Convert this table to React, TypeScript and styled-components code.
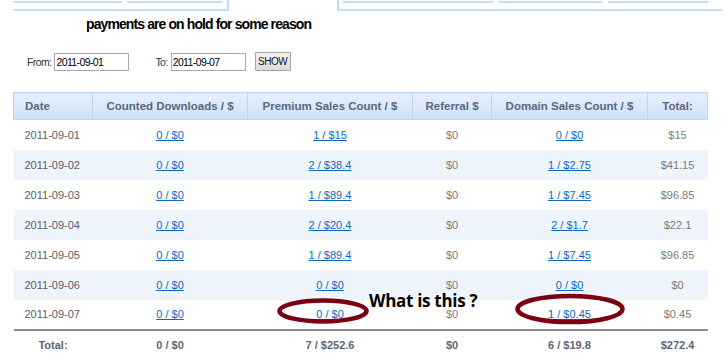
import styled, { createGlobalStyle } from "styled-components";

interface IRow {
  date: string;
  downloads: string;
  premium: string;
  referral: string;
  domain: string;
  total: string;
}

const rows: IRow[] = [
  { date: "2011-09-01", downloads: "0 / $0", premium: "1 / $15", referral: "$0", domain: "0 / $0", total: "$15" },
  { date: "2011-09-02", downloads: "0 / $0", premium: "2 / $38.4", referral: "$0", domain: "1 / $2.75", total: "$41.15" },
  { date: "2011-09-03", downloads: "0 / $0", premium: "1 / $89.4", referral: "$0", domain: "1 / $7.45", total: "$96.85" },
  { date: "2011-09-04", downloads: "0 / $0", premium: "2 / $20.4", referral: "$0", domain: "2 / $1.7", total: "$22.1" },
  { date: "2011-09-05", downloads: "0 / $0", premium: "1 / $89.4", referral: "$0", domain: "1 / $7.45", total: "$96.85" },
  { date: "2011-09-06", downloads: "0 / $0", premium: "0 / $0", referral: "$0", domain: "0 / $0", total: "$0" },
  { date: "2011-09-07", downloads: "0 / $0", premium: "0 / $0", referral: "$0", domain: "1 / $0.45", total: "$0.45" },
];

function App() {
  return (
    <>
      <GlobalStyles />
      <Page>
        <TabBar>
          <TabGroup side="left">
            <Tab w={109} />
            <Tab w={95} />
          </TabGroup>
          <ActiveTab />
          <TabGroup side="right">
            <Tab w={150} />
            <Tab w={103} />
            <Tab w={100} />
          </TabGroup>
        </TabBar>

        <Title>payments are on hold for some reason</Title>

        <FilterRow>
          <FilterLabel>From:</FilterLabel>
          <DateInput defaultValue="2011-09-01" />
          <FilterLabel spaced>To:</FilterLabel>
          <DateInput defaultValue="2011-09-07" />
          <ShowButton>SHOW</ShowButton>
        </FilterRow>

        <StatsTable>
          <colgroup>
            <col style={{ width: 79 }} />
            <col style={{ width: 155 }} />
            <col style={{ width: 165 }} />
            <col style={{ width: 79 }} />
            <col style={{ width: 156 }} />
            <col style={{ width: 60 }} />
          </colgroup>
          <thead>
            <tr>
              <HeadCell left>Date</HeadCell>
              <HeadCell>Counted Downloads / $</HeadCell>
              <HeadCell>Premium Sales Count / $</HeadCell>
              <HeadCell>Referral $</HeadCell>
              <HeadCell>Domain Sales Count / $</HeadCell>
              <HeadCell>Total:</HeadCell>
            </tr>
          </thead>
          <tbody>
            {rows.map((row, i) => (
              <BodyRow key={row.date} odd={i % 2 === 1}>
                <DateCell>{row.date}</DateCell>
                <Cell>
                  <ValueLink href="#">{row.downloads}</ValueLink>
                </Cell>
                <Cell>
                  <ValueLink href="#">{row.premium}</ValueLink>
                </Cell>
                <Cell>{row.referral}</Cell>
                <Cell>
                  <ValueLink href="#">{row.domain}</ValueLink>
                </Cell>
                <Cell>{row.total}</Cell>
              </BodyRow>
            ))}
          </tbody>
          <tfoot>
            <tr>
              <FootCell>Total:</FootCell>
              <FootCell>0 / $0</FootCell>
              <FootCell>7 / $252.6</FootCell>
              <FootCell>$0</FootCell>
              <FootCell>6 / $19.8</FootCell>
              <FootCell>$272.4</FootCell>
            </tr>
          </tfoot>
        </StatsTable>

        <Note>What is this ?</Note>
        <Circle viewBox="0 0 92 26" x={277} y={298} w={92} h={26}>
          <ellipse cx="46" cy="13" rx="43.5" ry="10.5" />
        </Circle>
        <Circle viewBox="0 0 110 32" x={515} y={293} w={110} h={32}>
          <ellipse cx="55" cy="16" rx="52.5" ry="13" />
        </Circle>
      </Page>
    </>
  );
}

const GlobalStyles = createGlobalStyle`
  body {
    margin: 0;
    background: #ffffff;
    font-family: "Liberation Sans", Arial, sans-serif;
  }
`;

const Page = styled.div`
  position: relative;
  width: 727px;
  height: 358px;
  overflow: hidden;
`;

const TabBar = styled.div`
  display: flex;
  height: 11px;
  padding: 0 5px 0 13px;
`;

const TabGroup = styled.div<{ side: "left" | "right" }>`
  display: flex;
  align-items: flex-start;
  gap: ${(p) => (p.side === "left" ? 5 : 6)}px;
  box-sizing: border-box;
  border-bottom: 2px solid #bddff7;
  ${(p) =>
    p.side === "left"
      ? "width: 216px; border-right: 2px solid #bddff7;"
      : "flex: 1; border-left: 2px solid #bddff7; padding-left: 4px;"}
`;

const Tab = styled.div<{ w: number }>`
  width: ${(p) => p.w}px;
  height: 3px;
  box-sizing: border-box;
  border-bottom: 2px solid #bddff7;
`;

const ActiveTab = styled.div`
  width: 108px;
`;

const Title = styled.h1`
  margin: 3px 0 0 86px;
  font-family: "Liberation Sans", Arial, sans-serif;
  font-size: 14px;
  line-height: 20px;
  font-weight: 700;
  letter-spacing: -0.9px;
  color: #000000;
`;

const FilterRow = styled.div`
  display: flex;
  align-items: center;
  margin-top: 18px;
  padding-left: 27px;
  height: 19px;
`;

const FilterLabel = styled.span<{ spaced?: boolean }>`
  font-size: 10.5px;
  letter-spacing: -0.6px;
  color: #333333;
  margin: 0 3px 0 ${(p) => (p.spaced ? 26 : 0)}px;
`;

const DateInput = styled.input`
  width: 75px;
  height: 18px;
  box-sizing: border-box;
  border: 1px solid #a9a9a9;
  padding: 0 1px;
  font-family: "Liberation Sans", Arial, sans-serif;
  font-size: 10.5px;
  letter-spacing: -0.6px;
  color: #000000;
  outline: none;
`;

const ShowButton = styled.button`
  width: 36px;
  height: 19px;
  margin-left: 9px;
  padding: 0;
  box-sizing: border-box;
  border: 1px solid #a3a3a3;
  border-radius: 1px;
  background: linear-gradient(#f3f3f3, #dcdcdc);
  font-family: "Liberation Sans", Arial, sans-serif;
  font-size: 10px;
  letter-spacing: -0.4px;
  color: #111111;
`;

const StatsTable = styled.table`
  margin: 21px 0 0 13px;
  width: 694px;
  table-layout: fixed;
  border-collapse: collapse;
  font-family: "Liberation Sans", Arial, sans-serif;
  font-size: 11px;
`;

const HeadCell = styled.th<{ left?: boolean }>`
  height: 27px;
  padding: 0 ${(p) => (p.left ? "0 0 11px" : "0")};
  box-sizing: border-box;
  text-align: ${(p) => (p.left ? "left" : "center")};
  font-size: 11.5px;
  font-weight: 700;
  color: #5a687d;
  background: linear-gradient(#e6effd, #cfe1f8);
  border: 1px solid #bed6f5;
  white-space: nowrap;
`;

const BodyRow = styled.tr<{ odd: boolean }>`
  height: 30px;
  background: ${(p) => (p.odd ? "#eef5fd" : "#ffffff")};

  &:last-child td {
    border-bottom: 2px solid #8c8c8c;
  }
`;

const Cell = styled.td`
  padding: 0;
  text-align: center;
  color: #7b7b7b;
`;

const DateCell = styled.td`
  padding: 0 0 0 11px;
  color: #58606b;
`;

const ValueLink = styled.a`
  color: #0e67c4;
  text-decoration: underline;
`;

const FootCell = styled.td`
  height: 28px;
  padding: 0;
  text-align: center;
  font-weight: 700;
  color: #5c6677;
`;

const Note = styled.div`
  position: absolute;
  left: 369px;
  top: 294px;
  font-family: "Open Sans", "Liberation Sans", sans-serif;
  font-size: 17px;
  line-height: 14px;
  font-weight: 700;
  letter-spacing: -0.3px;
  color: #000000;
`;

const Circle = styled.svg<{ x: number; y: number; w: number; h: number }>`
  position: absolute;
  left: ${(p) => p.x}px;
  top: ${(p) => p.y}px;
  width: ${(p) => p.w}px;
  height: ${(p) => p.h}px;
  fill: none;
  stroke: #7a0012;
  stroke-width: 4.5;
`;

export default App;
